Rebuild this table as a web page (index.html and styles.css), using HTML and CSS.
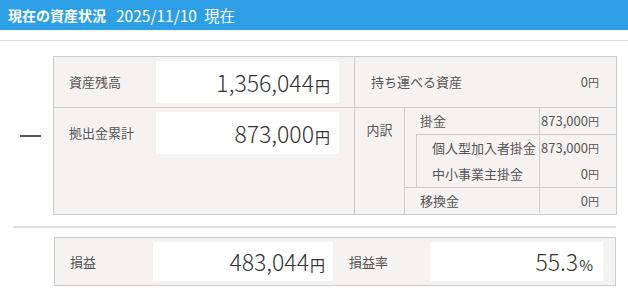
FILE: index.html
```html
<html lang="ja">
<head>
    <meta charset="UTF-8">
    <meta name="viewport" content="width=device-width, initial-scale=1.0">
    <title>現在の資産状況</title>
    <link rel="stylesheet" href="styles.css">
</head>
<body>
    <div class="title-bar">
        <span class="title">現在の資産状況</span>
        <span class="date">2025/11/10&nbsp; 現在</span>
    </div>

    <div class="status">
        <div class="summary">
            <div class="dash"><span></span></div>
            <div class="box">
                <div class="left-col">
                    <div class="row first">
                        <div class="label">資産残高</div>
                        <div class="amount">1,356,044<small>円</small></div>
                    </div>
                    <div class="row second">
                        <div class="label">拠出金累計</div>
                        <div class="amount">873,000<small>円</small></div>
                    </div>
                </div>
                <div class="right-col">
                    <div class="portable">
                        <span>持ち運べる資産</span>
                        <span class="yen">0<small>円</small></span>
                    </div>
                    <div class="detail">
                        <div class="detail-head">内訳</div>
                        <div class="breakdown">
                            <div class="brow">
                                <div class="bname">掛金</div>
                                <div class="bval">873,000<small>円</small></div>
                            </div>
                            <div class="nested">
                                <div class="brow">
                                    <div class="bname">個人型加入者掛金</div>
                                    <div class="bval">873,000<small>円</small></div>
                                </div>
                                <div class="brow">
                                    <div class="bname">中小事業主掛金</div>
                                    <div class="bval">0<small>円</small></div>
                                </div>
                            </div>
                            <div class="brow transfer">
                                <div class="bname">移換金</div>
                                <div class="bval">0<small>円</small></div>
                            </div>
                        </div>
                    </div>
                </div>
            </div>
        </div>

        <hr class="divider">

        <div class="profit">
            <div class="plabel">損益</div>
            <div class="amount pbox">483,044<small>円</small></div>
            <div class="plabel rate">損益率</div>
            <div class="amount pbox wide">55.3<small>%</small></div>
        </div>
    </div>
</body>
</html>
```

FILE: styles.css
```css
* {
  box-sizing: border-box;
}

body {
  margin: 0;
  font-family: "Noto Sans CJK JP", "Noto Sans", sans-serif;
  color: #444;
  background: #fff;
}

.title-bar {
  height: 30px;
  background-color: #2d9fe7;
  color: #fff;
  font-size: 14px;
  display: flex;
  align-items: center;
  padding-left: 8px;
}

.title {
  font-weight: bold;
  margin-right: 10px;
}

.date {
  font-size: 15.5px;
}

.status {
  margin-top: 10px;
  border-top: 1px solid #ddd;
}

.summary {
  display: flex;
  margin-top: 15px;
}

.dash {
  width: 53px;
  display: flex;
  align-items: center;
  justify-content: center;
  padding-left: 8px;
}

.dash span {
  display: block;
  width: 21px;
  height: 2px;
  background: #555;
}

.box {
  width: 564px;
  height: 159px;
  border: 1px solid #ccc;
  background-color: #f4f3f1;
  display: flex;
}

/* left half: totals */
.left-col {
  width: 301px;
  border-right: 1px solid #ccc;
  display: flex;
  flex-direction: column;
}

.row {
  display: flex;
  align-items: flex-start;
  padding: 4px 15px 0 15px;
}

.row.first {
  height: 51px;
  border-bottom: 1px solid #ccc;
}

.row.second {
  flex: 1;
}

.label {
  width: 87px;
  font-size: 13px;
  color: #555;
  line-height: 42px;
}

.amount {
  background: #fff;
  flex: 1;
  height: 42px;
  text-align: right;
  padding-right: 9px;
  font-size: 23px;
  font-weight: 300;
  color: #333;
  line-height: 42px;
  white-space: nowrap;
}

.amount small {
  font-size: 15px;
  font-weight: 400;
  margin-left: 1px;
}

/* right half: portable assets */
.right-col {
  flex: 1;
  display: flex;
  flex-direction: column;
}

.portable {
  height: 51px;
  border-bottom: 1px solid #ccc;
  display: flex;
  justify-content: space-between;
  align-items: center;
  padding: 0 17px 2px 16px;
  font-size: 13px;
  color: #555;
}

.yen small,
.bval small {
  font-size: 11px;
}

.detail {
  flex: 1;
  display: flex;
}

.detail-head {
  width: 50px;
  border-right: 1px solid #ccc;
  text-align: center;
  font-size: 13px;
  color: #555;
  padding-top: 12px;
}

.breakdown {
  flex: 1;
  display: flex;
  flex-direction: column;
}

.brow {
  display: flex;
  height: 26px;
  font-size: 13px;
  color: #555;
}

.bname {
  width: 135px;
  border-right: 1px solid #ccc;
  padding-left: 15px;
  line-height: 26px;
}

.bval {
  flex: 1;
  text-align: right;
  padding-right: 17px;
  line-height: 26px;
  white-space: nowrap;
}

.nested {
  margin-left: 11px;
  border-top: 1px solid #ccc;
  border-left: 1px solid #ccc;
}

.nested .bname {
  width: 123px;
}

.transfer {
  border-top: 1px solid #ccc;
}

/* profit / loss */
.divider {
  margin: 11px 12px 0 13px;
  border: 0;
  height: 2px;
  background: #ddd;
}

.profit {
  margin: 9px 12px 0 54px;
  height: 49px;
  border: 1px solid #ccc;
  background-color: #f4f3f1;
  display: flex;
  align-items: center;
  padding: 0 12px 1px 15px;
}

.plabel {
  width: 83px;
  font-size: 13px;
  color: #555;
}

.plabel.rate {
  width: 81px;
  margin-left: 16px;
}

.pbox {
  flex: none;
  width: 180px;
  height: 39px;
  line-height: 39px;
  padding-right: 8px;
}

.pbox.wide {
  flex: 1;
  padding-right: 10px;
}
```
